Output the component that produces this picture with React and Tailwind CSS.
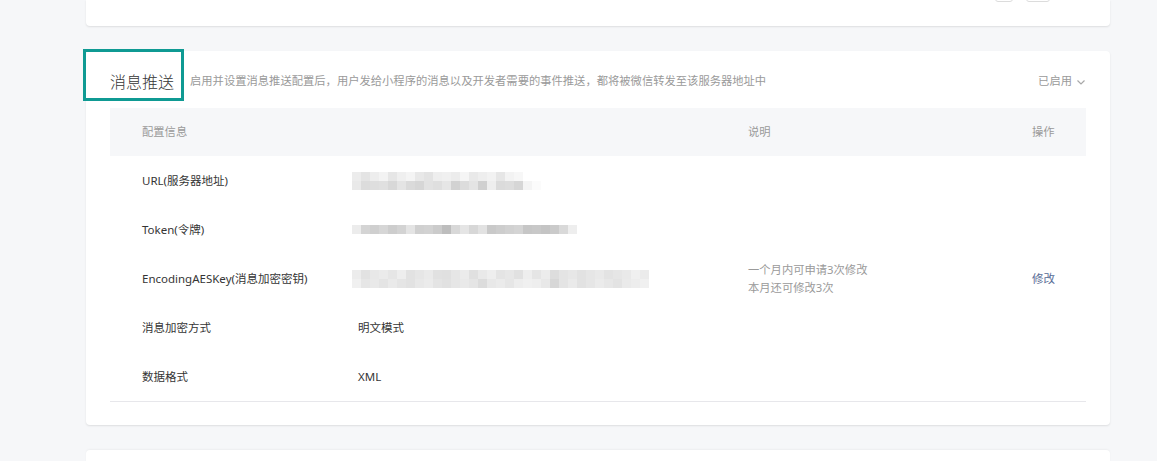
import React from 'react';

// mosaic blocks standing in for the blurred secret values
const urlTop = ['bg-[#ececec]', 'bg-[#e4e4e4]', 'bg-[#ededed]', 'bg-[#f3f3f3]', 'bg-[#e6e6e6]', 'bg-[#efefef]', 'bg-[#f4f4f4]', 'bg-[#e8e8e8]', 'bg-[#e3e3e3]', 'bg-[#eeeeee]', 'bg-[#f0f0f0]', 'bg-[#ececec]', 'bg-[#f5f5f5]', 'bg-[#e9e9e9]', 'bg-[#eeeeee]', 'bg-[#f2f2f2]', 'bg-[#e6e6e6]', 'bg-[#f3f3f3]', 'bg-[#f7f7f7]', 'bg-[#ffffff]', 'bg-[#ffffff]'];
const urlBottom = ['bg-[#e9e9e9]', 'bg-[#dcdcdc]', 'bg-[#dedede]', 'bg-[#e0e0e0]', 'bg-[#d8d8d8]', 'bg-[#e4e4e4]', 'bg-[#dadada]', 'bg-[#d6d6d6]', 'bg-[#e2e2e2]', 'bg-[#dfdfdf]', 'bg-[#e6e6e6]', 'bg-[#d2d2d2]', 'bg-[#dcdcdc]', 'bg-[#e4e4e4]', 'bg-[#d0d0d0]', 'bg-[#eeeeee]', 'bg-[#dbdbdb]', 'bg-[#dddddd]', 'bg-[#d6d6d6]', 'bg-[#f4f4f4]', 'bg-[#fbfbfb]'];
const tokenRow = ['bg-[#ececec]', 'bg-[#d4d4d4]', 'bg-[#cfcfcf]', 'bg-[#d6d6d6]', 'bg-[#cdcdcd]', 'bg-[#d3d3d3]', 'bg-[#e4e4e4]', 'bg-[#d0d0d0]', 'bg-[#d2d2d2]', 'bg-[#cbcbcb]', 'bg-[#bdbdbd]', 'bg-[#d8d8d8]', 'bg-[#e5e5e5]', 'bg-[#d7d7d7]', 'bg-[#e2e2e2]', 'bg-[#c9c9c9]', 'bg-[#cdcdcd]', 'bg-[#d1d1d1]', 'bg-[#d4d4d4]', 'bg-[#c6c6c6]', 'bg-[#c8c8c8]', 'bg-[#c4c4c4]', 'bg-[#cacaca]', 'bg-[#d9d9d9]', 'bg-[#eeeeee]'];
const aesTop = ['bg-[#ececec]', 'bg-[#e2e2e2]', 'bg-[#e8e8e8]', 'bg-[#ebebeb]', 'bg-[#e6e6e6]', 'bg-[#eeeeee]', 'bg-[#e2e2e2]', 'bg-[#e6e6e6]', 'bg-[#eaeaea]', 'bg-[#e1e1e1]', 'bg-[#e0e0e0]', 'bg-[#e6e6e6]', 'bg-[#ebebeb]', 'bg-[#e0e0e0]', 'bg-[#e9e9e9]', 'bg-[#eeeeee]', 'bg-[#e4e4e4]', 'bg-[#e7e7e7]', 'bg-[#e1e1e1]', 'bg-[#eeeeee]', 'bg-[#e5e5e5]', 'bg-[#ececec]', 'bg-[#dddddd]', 'bg-[#e4e4e4]', 'bg-[#e7e7e7]', 'bg-[#e2e2e2]', 'bg-[#e6e6e6]', 'bg-[#e9e9e9]', 'bg-[#e3e3e3]', 'bg-[#e6e6e6]', 'bg-[#e9e9e9]', 'bg-[#f0f0f0]', 'bg-[#ebebeb]'];
const aesBottom = ['bg-[#f0f0f0]', 'bg-[#e6e6e6]', 'bg-[#e9e9e9]', 'bg-[#e4e4e4]', 'bg-[#eaeaea]', 'bg-[#e5e5e5]', 'bg-[#e2e2e2]', 'bg-[#e8e8e8]', 'bg-[#ebebeb]', 'bg-[#e4e4e4]', 'bg-[#e1e1e1]', 'bg-[#e6e6e6]', 'bg-[#e9e9e9]', 'bg-[#e5e5e5]', 'bg-[#dcdcdc]', 'bg-[#e8e8e8]', 'bg-[#ebebeb]', 'bg-[#e6e6e6]', 'bg-[#ededed]', 'bg-[#f0f0f0]', 'bg-[#eeeeee]', 'bg-[#e8e8e8]', 'bg-[#d7d7d7]', 'bg-[#e4e4e4]', 'bg-[#eaeaea]', 'bg-[#e2e2e2]', 'bg-[#e6e6e6]', 'bg-[#ebebeb]', 'bg-[#e7e7e7]', 'bg-[#e3e3e3]', 'bg-[#eaeaea]', 'bg-[#ededed]', 'bg-[#f0f0f0]'];

const Mosaic = ({ rows }) => (
  <div className="-ml-[6px] flex flex-col">
    {rows.map((row, r) => (
      <div key={r} className="flex">
        {row.map((c, i) => (
          <div key={i} className={`h-[9px] w-[9px] ${c}`} />
        ))}
      </div>
    ))}
  </div>
);

const rows = [
  { label: 'URL(服务器地址)', value: <Mosaic rows={[urlTop, urlBottom]} /> },
  { label: 'Token(令牌)', value: <Mosaic rows={[tokenRow]} /> },
  {
    label: 'EncodingAESKey(消息加密密钥)',
    value: <Mosaic rows={[aesTop, aesBottom]} />,
    desc: ['一个月内可申请3次修改', '本月还可修改3次'],
    action: '修改',
  },
  { label: '消息加密方式', value: '明文模式' },
  { label: '数据格式', value: 'XML' },
];

export default function App() {
  return (
    <div
      className="min-h-[461px] bg-[#f6f7f9] pl-[86px] pr-[47px]"
      style={{ fontFamily: '"Noto Sans", "Noto Sans CJK SC", sans-serif' }}
    >
      {/* previous card, only its bottom is visible */}
      <div className="h-[26px] w-[1024px] overflow-hidden rounded-b bg-white shadow-[0_1px_2px_rgba(0,0,0,0.1)]">
        <div className="-mt-[28px] flex justify-end gap-[13px] pr-[60px]">
          <div className="h-[30px] w-[18px] rounded-[3px] border border-[#dcdcdc] bg-white" />
          <div className="h-[30px] w-[24px] rounded-[3px] border border-[#dcdcdc] bg-white" />
        </div>
      </div>

      {/* message push card */}
      <div className="relative mt-[25px] w-[1024px] rounded bg-white px-[24px] pb-[23px] shadow-[0_1px_2px_rgba(0,0,0,0.1)]">
        <div className="absolute -left-[3px] -top-[2px] h-[52px] w-[101px] border-[3px] border-[#0f9a93]" />
        <div className="flex h-[57px] items-center pt-[4px]">
          <span className="text-[16px] font-light text-[#353535]">消息推送</span>
          <span className="ml-[16px] text-[11.3px] text-[#9a9a9a]">
            启用并设置消息推送配置后，用户发给小程序的消息以及开发者需要的事件推送，都将被微信转发至该服务器地址中
          </span>
          <span className="ml-auto flex items-center gap-[4px] text-[11.3px] text-[#9a9a9a]">
            已启用
            <svg width="10" height="10" viewBox="0 0 10 10" fill="none" stroke="#a8a8a8" strokeWidth="1.2">
              <path d="M1.5 3.5 5 7l3.5-3.5" />
            </svg>
          </span>
        </div>

        <div className="border-b border-[#e7e7eb]">
          <div className="grid h-[48px] grid-cols-[248px_390px_284px_54px] items-center bg-[#f6f7f9] text-[11.3px] text-[#9a9a9a]">
            <div className="pl-[32px]">配置信息</div>
            <div />
            <div>说明</div>
            <div>操作</div>
          </div>
          {rows.map((row) => (
            <div
              key={row.label}
              className="grid h-[49px] grid-cols-[248px_390px_284px_54px] items-center text-[11.5px] text-[#353535]"
            >
              <div className="pl-[32px]">{row.label}</div>
              <div>{row.value}</div>
              <div className="text-[11.3px] leading-[18px] text-[#9a9a9a]">
                {row.desc && row.desc.map((d) => <div key={d}>{d}</div>)}
              </div>
              <div className="text-[#576b95]">{row.action}</div>
            </div>
          ))}
        </div>
      </div>

      {/* next card, only its top is visible */}
      <div className="mt-[25px] h-[40px] w-[1024px] rounded-t bg-white shadow-[0_-1px_2px_rgba(0,0,0,0.04)]" />
    </div>
  );
}
